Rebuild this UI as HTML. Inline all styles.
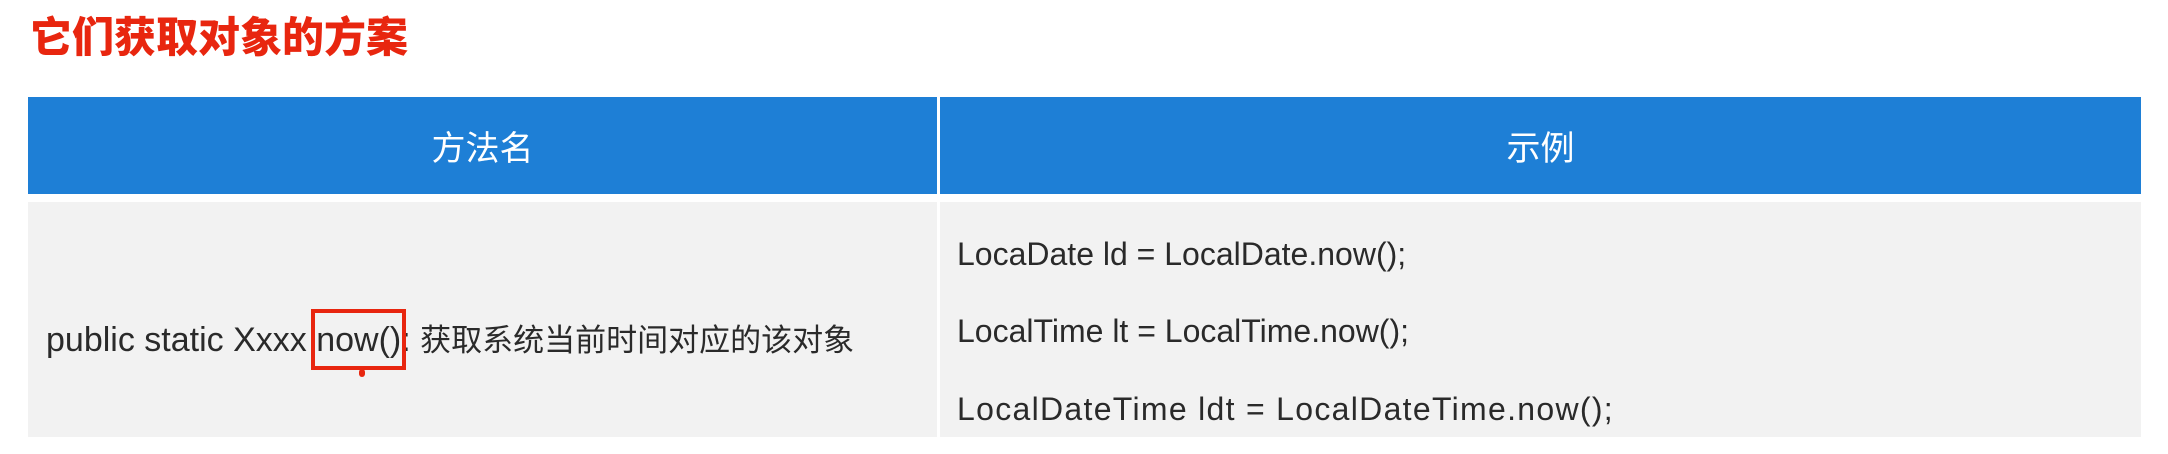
<!DOCTYPE html>
<html><head><meta charset="utf-8"><style>
body{margin:0;width:2168px;height:454px;background:#fff;position:relative;overflow:hidden;font-family:"Liberation Sans","Noto Sans CJK SC",sans-serif;}
.t{position:absolute;left:30px;top:4px;font-size:42px;font-weight:900;color:#e8260f;font-family:"Noto Sans CJK SC",sans-serif;}
.h{position:absolute;top:97px;height:97px;background:#1e7fd6;color:#fff;font-size:34px;display:flex;align-items:center;justify-content:center;font-family:"Noto Sans CJK SC",sans-serif;}
.b{position:absolute;top:202px;height:235px;background:#f2f2f2;}
.l{position:absolute;left:957px;font-size:32px;color:#2a2a2a;white-space:nowrap;}
.bx{position:relative;display:inline-block;}
.bx::before{content:"";position:absolute;left:-5px;right:-5px;top:-12px;bottom:-10px;border:4px solid #e8260f;}
.bx::after{content:"";position:absolute;left:50%;bottom:-17px;width:6px;height:8px;background:#e8260f;border-radius:3px;}
</style></head><body>
<div class="t">它们获取对象的方案</div>
<div class="h" style="left:28px;width:909px">方法名</div>
<div class="h" style="left:940px;width:1201px">示例</div>
<div class="b" style="left:28px;width:909px"></div>
<div class="b" style="left:940px;width:1201px"></div>
<div style="position:absolute;left:46px;top:315px;font-size:34px;color:#2a2a2a;white-space:nowrap">public static Xxxx&nbsp;<span class="bx">now()</span>: <span style="font-size:31px">获取系统当前时间对应的该对象</span></div>
<div class="l" style="top:236px">LocaDate ld = LocalDate.now();</div>
<div class="l" style="top:313px">LocalTime lt = LocalTime.now();</div>
<div class="l" style="top:391px;letter-spacing:1.3px">LocalDateTime ldt = LocalDateTime.now();</div>
</body></html>
